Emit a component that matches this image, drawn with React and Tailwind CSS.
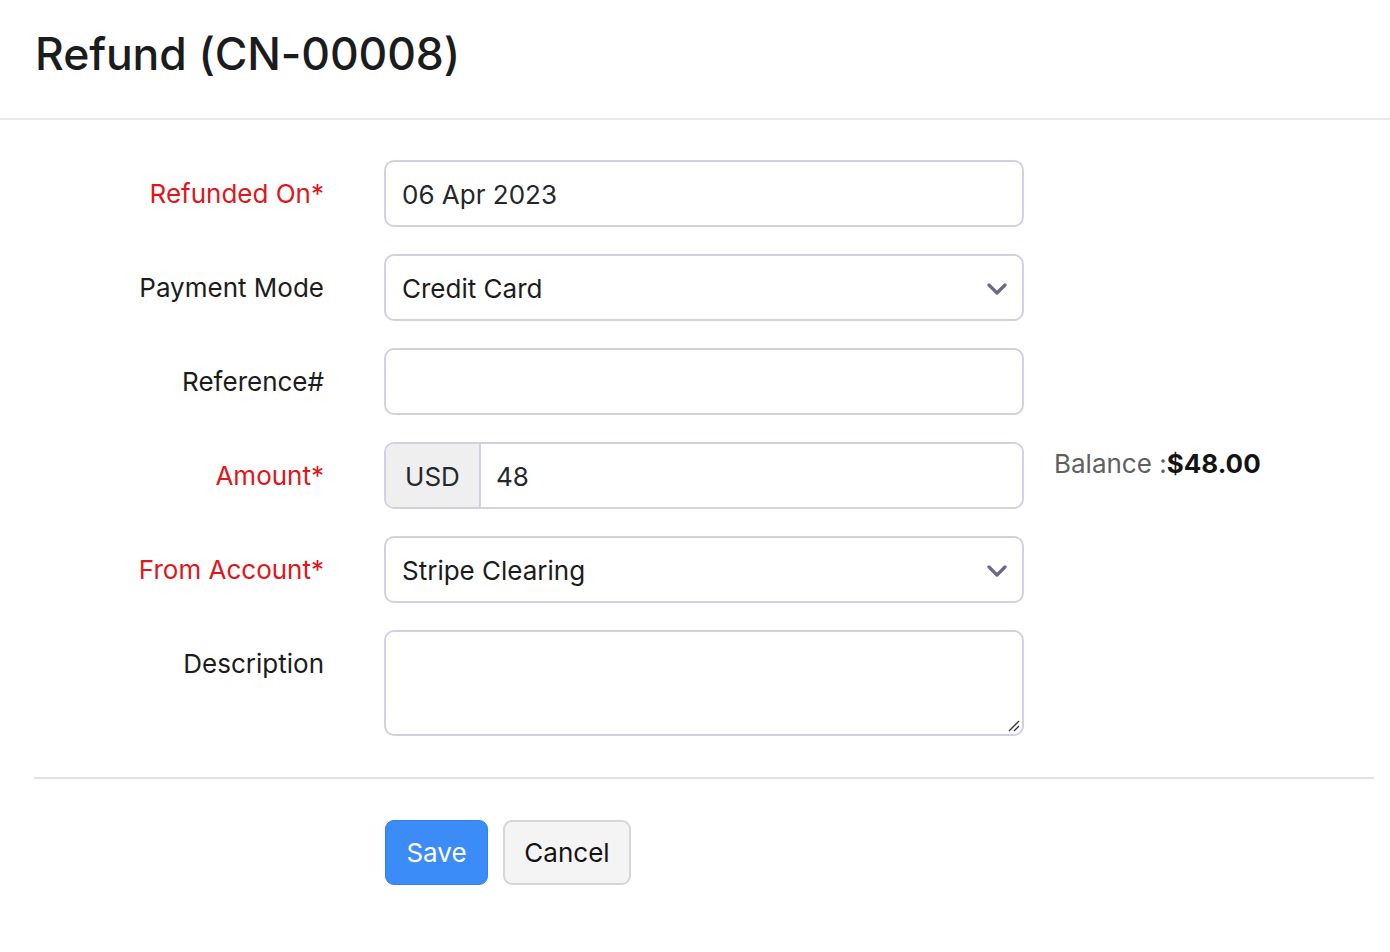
import React from 'react';

const Chevron = () => (
    <svg width="20" height="14" viewBox="0 0 20 14" fill="none" className="shrink-0">
        <path d="M2 3l8 8 8-8" stroke="#6c6885" strokeWidth="3.2" strokeLinecap="round" strokeLinejoin="round" />
    </svg>
);

const Row = ({ label, required, children, aside }) => (
    <div className="flex items-start">
        <div className={`w-[324px] shrink-0 text-right pt-[18px] leading-[32px] ${required ? 'text-[#e0161b]' : 'text-[#1c1c1c]'}`}>
            {label}{required ? '*' : ''}
        </div>
        <div className="ml-[60px] w-[640px] shrink-0">{children}</div>
        {aside}
    </div>
);

const box = 'h-[67px] rounded-[10px] border-2 border-[#d3d1e1] bg-white flex items-center';

export default function App() {
    return (
        <div className="min-h-screen bg-white text-[26px] font-['Inter','Liberation_Sans',sans-serif] text-[#1c1c1c]">
            {/* Header */}
            <div className="h-[120px] border-b-2 border-[#e8e8e8] px-[35px] flex items-center">
                <h1 className="text-[44.5px] font-medium tracking-[-0.1px] text-[#1b1c1e] -mt-[10px]">Refund (CN-00008)</h1>
            </div>

            {/* Form */}
            <div className="pt-[40px] pl-[34px] pr-[16px]">
                <div className="-ml-[34px] flex flex-col gap-[27px]">
                    <Row label="Refunded On" required>
                        <div className={`${box} px-[16px] pt-[2px] text-[#24272b]`}>06 Apr 2023</div>
                    </Row>
                    <Row label="Payment Mode">
                        <div className={`${box} pl-[16px] pr-[15px] pt-[2px] justify-between`}>
                            <span>Credit Card</span>
                            <Chevron />
                        </div>
                    </Row>
                    <Row label="Reference#">
                        <div className={box}></div>
                    </Row>
                    <Row
                        label="Amount"
                        required
                        aside={
                            <div className="ml-[30px] pt-[6px] leading-[32px] whitespace-nowrap">
                                <span className="text-[#5f5f5f]">Balance :</span>
                                <span className="font-bold text-[#141414]">$48.00</span>
                            </div>
                        }
                    >
                        <div className={`${box} overflow-hidden`}>
                            <div className="h-full w-[95px] pt-[2px] bg-[#efefef] border-r-2 border-[#d3d1e1] flex items-center justify-center text-[#24272b]">USD</div>
                            <div className="pl-[15px] pt-[2px] text-[#24272b]">48</div>
                        </div>
                    </Row>
                    <Row label="From Account" required>
                        <div className={`${box} pl-[16px] pr-[15px] pt-[2px] justify-between`}>
                            <span>Stripe Clearing</span>
                            <Chevron />
                        </div>
                    </Row>
                    <Row label="Description">
                        <div className="relative h-[106px] rounded-[10px] border-2 border-[#d3d1e1] bg-white">
                            <svg width="14" height="14" viewBox="0 0 14 14" className="absolute right-[1px] bottom-[1px]">
                                <path d="M2 12L12 2M7 12l5-5" stroke="#333" strokeWidth="1.3" />
                            </svg>
                        </div>
                    </Row>
                </div>

                <div className="mt-[41px] border-t-2 border-[#e2e2e2]"></div>

                <div className="pt-[41px] pl-[351px] flex gap-[15px]">
                    <button className="h-[65px] w-[103px] rounded-[9px] bg-[#3b8cf6] border border-[#2f7ff0] text-white">Save</button>
                    <button className="h-[65px] w-[128px] rounded-[9px] bg-[#f4f4f4] border-2 border-[#d6d6d6] text-[#141414]">Cancel</button>
                </div>
            </div>
        </div>
    );
}
